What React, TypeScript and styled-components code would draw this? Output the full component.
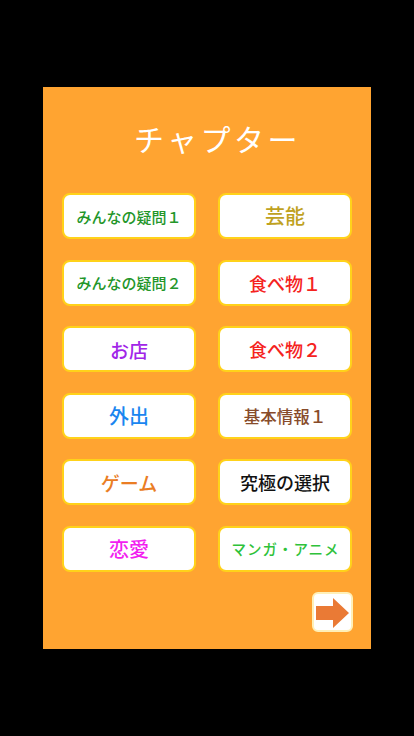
import React from "react";
import styled, { createGlobalStyle } from "styled-components";

const Global = createGlobalStyle`
  html, body { margin: 0; padding: 0; background: #000; }
  #root { width: 414px; height: 736px; }
`;

const Screen = styled.div`
  width: 414px;
  height: 736px;
  background: #000;
  display: flex;
  align-items: center;
  justify-content: center;
  font-family: "Noto Sans CJK JP", "Noto Sans", sans-serif;
`;

const Panel = styled.div`
  width: 328px;
  height: 562px;
  box-sizing: border-box;
  background: #ffa431;
  padding: 0 18px 17px 19px;
  display: flex;
  flex-direction: column;
`;

const Title = styled.h1`
  margin: 0;
  height: 106px;
  box-sizing: border-box;
  padding: 0 0 4px 20px;
  display: flex;
  align-items: center;
  justify-content: center;
  color: #fff;
  font-size: 30px;
  font-weight: 400;
  letter-spacing: 3.5px;
`;

const Grid = styled.div`
  display: grid;
  grid-template-columns: 134px 134px;
  grid-auto-rows: 46px;
  column-gap: 22px;
  row-gap: 20.6px;
`;

const ChapterButton = styled.button<{ $color: string; $size: number; $spacing?: number }>`
  box-sizing: border-box;
  background: #fff;
  border: 2px solid #ffd21a;
  border-radius: 8px;
  display: flex;
  align-items: center;
  justify-content: center;
  padding: 0 0 0 ${(p) => p.$spacing ?? 0}px;
  color: ${(p) => p.$color};
  font-family: "Noto Sans CJK JP", "Noto Sans", sans-serif;
  font-size: ${(p) => p.$size}px;
  font-weight: 500;
  letter-spacing: ${(p) => p.$spacing ?? 0}px;
  line-height: 1;
`;

const Footer = styled.div`
  margin-top: auto;
  display: flex;
  justify-content: flex-end;
`;

const NextButton = styled.button`
  box-sizing: border-box;
  width: 41px;
  height: 40px;
  background: #fff;
  border: 2px solid #fff0b8;
  border-radius: 6px;
  padding: 0;
  display: flex;
  align-items: center;
  justify-content: center;
`;

const items = [
  { label: "みんなの疑問１", color: "#23962a", size: 15 },
  { label: "芸能", color: "#bfa21f", size: 20 },
  { label: "みんなの疑問２", color: "#23962a", size: 15 },
  { label: "食べ物１", color: "#f5231e", size: 18 },
  { label: "お店", color: "#a125e8", size: 19 },
  { label: "食べ物２", color: "#f5231e", size: 18 },
  { label: "外出", color: "#1a86f0", size: 20 },
  { label: "基本情報１", color: "#874b2a", size: 16.5 },
  { label: "ゲーム", color: "#ea7d24", size: 19 },
  { label: "究極の選択", color: "#111", size: 18 },
  { label: "恋愛", color: "#f21ef0", size: 20 },
  { label: "マンガ・アニメ", color: "#2ec23a", size: 14.5, spacing: 1 },
];

export default function App() {
  return (
    <>
      <Global />
      <Screen>
        <Panel>
          <Title>チャプター</Title>
          <Grid>
            {items.map((it) => (
              <ChapterButton
                key={it.label}
                $color={it.color}
                $size={it.size}
                $spacing={it.spacing}
              >
                {it.label}
              </ChapterButton>
            ))}
          </Grid>
          <Footer>
            <NextButton aria-label="next">
              <svg width="37" height="36" viewBox="0 0 37 36">
                <polygon points="2,12 19,12 19,4 35,19 19,34 19,26 2,26" fill="#ea7a35" />
              </svg>
            </NextButton>
          </Footer>
        </Panel>
      </Screen>
    </>
  );
}
